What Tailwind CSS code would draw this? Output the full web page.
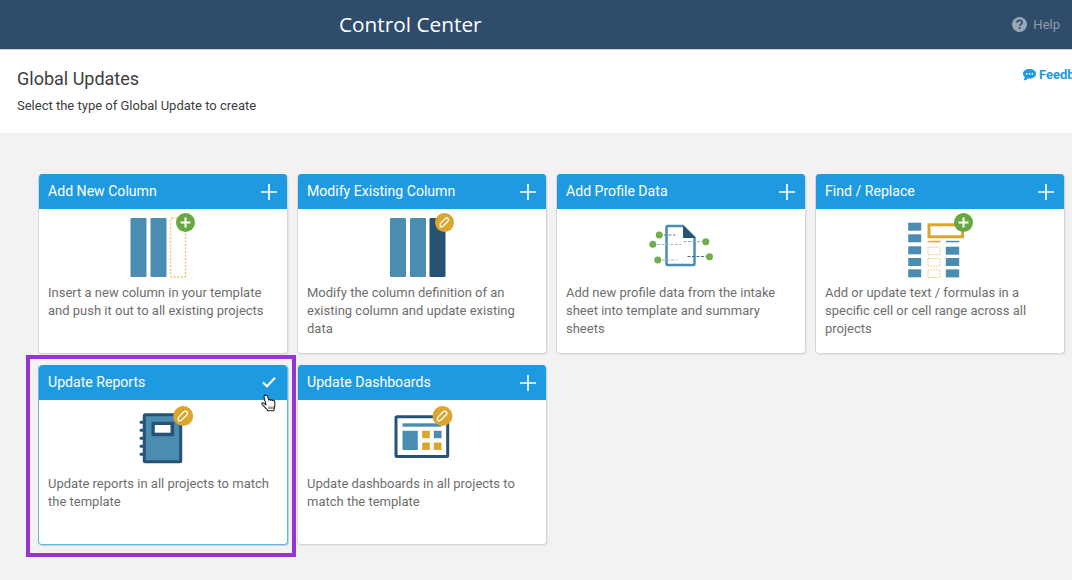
<!DOCTYPE html>
<html><head><meta charset="utf-8"><script src="https://cdn.jsdelivr.net/npm/@tailwindcss/browser@4"></script></head>
<body class="w-[1072px] h-[580px] overflow-hidden bg-[#f2f2f2] font-['Roboto',sans-serif]">
<header class="h-[50px] bg-[#2f4d6b] flex items-center border-b border-[#c3d0da]">
  <h1 class="ml-[339px] text-[20.800px] font-medium font-['Open_Sans',sans-serif] text-white leading-none">Control Center</h1>
  <div class="ml-auto mr-[12px] flex items-center gap-[6px] text-[#8e9bab] text-[13px]">
    <svg class="-mt-[1px]" width="15" height="15" viewBox="0 0 14 14"><circle cx="7" cy="7" r="7" fill="#9aa6b4"/><path d="M4.700 5.300c0-1.400 1-2.200 2.400-2.200s2.300.8 2.300 2c0 1-.6 1.400-1.200 1.800-.5.3-.8.6-.8 1.200" fill="none" stroke="#2f4d6b" stroke-width="1.600"/><rect x="6.300" y="9.300" width="1.700" height="1.700" fill="#2f4d6b"/></svg>
    <span>Help</span>
  </div>
</header>
<section class="h-[83px] bg-white flex">
  <div class="pl-[17px] pt-[17px] text-[#3d3d3d]">
    <h2 class="text-[18px] leading-[24px]">Global Updates</h2>
    <p class="text-[13px] leading-[20px] mt-[5px]">Select the type of Global Update to create</p>
  </div>
  <div class="ml-auto w-[49px] overflow-hidden pt-[16px] flex items-start gap-[3px] text-[13px] leading-[18px] font-bold text-[#1f9ade] whitespace-nowrap">
    <svg class="shrink-0 mt-[3px]" width="13" height="12" viewBox="0 0 13 12"><path d="M6.500 0C2.900 0 0 2 0 4.700c0 1.300.7 2.500 1.800 3.300C1.600 9.400 1 10.600 .4 11.500c1.700-.2 3.300-1 4.400-2.100.5.1 1.100.1 1.700.1C10.100 9.500 13 7.400 13 4.700S10.100 0 6.500 0z" fill="#1f9ade"/><circle cx="3.700" cy="4.800" r=".9" fill="#fff"/><circle cx="6.500" cy="4.800" r=".9" fill="#fff"/><circle cx="9.300" cy="4.800" r=".9" fill="#fff"/></svg>
    <span>Feedback</span>
  </div>
</section>
<main class="pl-[38px] pt-[41px] grid grid-cols-[repeat(4,250px)] gap-x-[9px] gap-y-[11px] auto-rows-[180px]">

  <article class="bg-white rounded-[4px] border border-[#d6d6d6] border-t-0 shadow-[1px_1px_0_#e6e6e6] flex flex-col overflow-hidden">
    <div class="h-[35px] shrink-0 bg-[#1e9be0] flex items-center justify-between pl-[9px] pr-[9px] text-white text-[14.100px]"><span>Add New Column</span>
      <svg width="18" height="18" viewBox="0 0 18 18"><path d="M9 1v16M1 9h16" stroke="#fff" stroke-width="1.700"/></svg></div>
    <svg class="self-center shrink-0" width="100" height="75" viewBox="112.500 209 100 75">
      <rect x="130" y="218" width="16" height="59" rx="1" fill="#4a8db0"/><rect x="150" y="218" width="16" height="59" rx="1" fill="#4a8db0"/>
      <rect x="170" y="218" width="15" height="59" rx="1.500" fill="none" stroke="#eec77a" stroke-width="1.500" stroke-dasharray="2 1.500"/>
      <circle cx="185" cy="222.500" r="9.500" fill="#69a744"/><path d="M185 217.500v10M180 222.500h10" stroke="#fff" stroke-width="2"/>
    </svg>
    <p class="px-[9px] text-[13px] leading-[18px] text-[#6e6e6e]">Insert a new column in your template and push it out to all existing projects</p>
  </article>

  <article class="bg-white rounded-[4px] border border-[#d6d6d6] border-t-0 shadow-[1px_1px_0_#e6e6e6] flex flex-col overflow-hidden">
    <div class="h-[35px] shrink-0 bg-[#1e9be0] flex items-center justify-between pl-[9px] pr-[9px] text-white text-[14.100px]"><span>Modify Existing Column</span>
      <svg width="18" height="18" viewBox="0 0 18 18"><path d="M9 1v16M1 9h16" stroke="#fff" stroke-width="1.700"/></svg></div>
    <svg class="self-center shrink-0" width="100" height="75" viewBox="371.500 209 100 75">
      <rect x="389.500" y="218" width="16" height="59" rx="1" fill="#4a8db0"/><rect x="409.500" y="218" width="16" height="59" rx="1" fill="#4a8db0"/><rect x="429" y="218" width="16" height="59" rx="1" fill="#255275"/>
      <circle cx="444" cy="222.500" r="9.500" fill="#dba52e"/><path d="M440.500 227l-1-.9.300-2.500 5-5c.8-.8 2-.8 2.700 0s.8 1.900 0 2.700l-5 5z" fill="none" stroke="#fff" stroke-width="1.300"/>
    </svg>
    <p class="px-[9px] text-[13px] leading-[18px] text-[#6e6e6e]">Modify the column definition of an existing column and update existing data</p>
  </article>

  <article class="bg-white rounded-[4px] border border-[#d6d6d6] border-t-0 shadow-[1px_1px_0_#e6e6e6] flex flex-col overflow-hidden">
    <div class="h-[35px] shrink-0 bg-[#1e9be0] flex items-center justify-between pl-[9px] pr-[9px] text-white text-[14.100px]"><span>Add Profile Data</span>
      <svg width="18" height="18" viewBox="0 0 18 18"><path d="M9 1v16M1 9h16" stroke="#fff" stroke-width="1.700"/></svg></div>
    <svg class="self-center shrink-0" width="100" height="75" viewBox="630.500 209 100 75">
      <path d="M667 226h15.500l11.500 11.500V264a1 1 0 0 1-1 1h-26a1 1 0 0 1-1-1v-37a1 1 0 0 1 1-1z" fill="#fff" stroke="#4a8db0" stroke-width="2.500"/>
      <path d="M682.500 225.500l12.500 12.500h-12.500z" fill="#255275"/>
      <g stroke-width="1.200" stroke-dasharray="3 1.500" fill="none">
        <path d="M659 235h16" stroke="#5b7f9c"/><path d="M652 244.500h29" stroke="#a9b6c9"/><path d="M657 260h20" stroke="#a9b6c9"/><path d="M683 241.500h22" stroke="#8ea3bb"/><path d="M687 256.500h22" stroke="#3f6a8c"/>
      </g>
      <g fill="#72ad49"><circle cx="658.700" cy="235" r="3.500"/><circle cx="652.300" cy="244.300" r="3.500"/><circle cx="657.300" cy="260" r="3.500"/><circle cx="705.300" cy="241.700" r="3.500"/><circle cx="709" cy="256.700" r="3.500"/></g>
    </svg>
    <p class="px-[9px] text-[13px] leading-[18px] text-[#6e6e6e]">Add new profile data from the intake sheet into template and summary sheets</p>
  </article>

  <article class="bg-white rounded-[4px] border border-[#d6d6d6] border-t-0 shadow-[1px_1px_0_#e6e6e6] flex flex-col overflow-hidden">
    <div class="h-[35px] shrink-0 bg-[#1e9be0] flex items-center justify-between pl-[9px] pr-[9px] text-white text-[14.100px]"><span>Find / Replace</span>
      <svg width="18" height="18" viewBox="0 0 18 18"><path d="M9 1v16M1 9h16" stroke="#fff" stroke-width="1.700"/></svg></div>
    <svg class="self-center shrink-0" width="100" height="75" viewBox="889.500 209 100 75">
      <g fill="#4a8db0"><rect x="907.700" y="222.700" width="13" height="8"/><rect x="907.700" y="234.300" width="13" height="8"/><rect x="907.700" y="246.300" width="13" height="8"/><rect x="907.700" y="258" width="13" height="8"/><rect x="907.700" y="269.300" width="13" height="8"/>
      <rect x="945.300" y="246.700" width="13.400" height="8"/><rect x="945.300" y="258" width="13.400" height="8"/><rect x="945.300" y="269.400" width="13.400" height="8"/><rect x="945.300" y="240.800" width="13.400" height="1.500"/></g>
      <rect x="928.500" y="224.800" width="33.500" height="12" fill="none" stroke="#dba52e" stroke-width="3"/>
      <rect x="927" y="240.800" width="13" height="1.500" fill="#dba52e"/>
      <g fill="none" stroke="#eec77a" stroke-width="1" stroke-dasharray="1.500 1"><rect x="927.500" y="247.200" width="12" height="7.500"/><rect x="927.500" y="258.500" width="12" height="7.500"/><rect x="927.500" y="270" width="12" height="7.500"/></g>
      <circle cx="963" cy="222.500" r="9.500" fill="#69a744"/><path d="M963 217.500v10M958 222.500h10" stroke="#fff" stroke-width="2"/>
    </svg>
    <p class="px-[9px] text-[13px] leading-[18px] text-[#6e6e6e]">Add or update text / formulas in a specific cell or cell range across all projects</p>
  </article>

  <article class="relative bg-white rounded-[4px] border border-[#5cb9ec] border-t-0 shadow-[1px_1px_0_#d0d0d0] flex flex-col">
    <div class="h-[35px] shrink-0 bg-[#1e9be0] rounded-t-[4px] flex items-center justify-between pl-[9px] pr-[9px] text-white text-[14.100px]"><span>Update Reports</span>
      <svg width="18" height="18" viewBox="0 0 18 18"><path d="M3 8.500l4 3.800 8-8.600" fill="none" stroke="#fff" stroke-width="2"/></svg></div>
    <svg class="self-center shrink-0" width="100" height="75" viewBox="112.500 400 100 75">
      <rect x="143.800" y="414.800" width="36.400" height="47" rx="1" fill="#4a8db0" stroke="#255275" stroke-width="3"/>
      <rect x="151" y="421.700" width="22.700" height="14.600" rx="1" fill="#255275"/><rect x="154.300" y="425" width="15.700" height="7.700" fill="#fff"/>
      <g stroke="#255275" stroke-width="3" stroke-linecap="round"><path d="M140.500 422.300h3M140.500 430.300h3M140.500 438.300h3M140.500 446.300h3M140.500 454.300h3"/></g>
      <circle cx="182.700" cy="416" r="10" fill="#dba52e"/><path d="M178.800 421l-1.100-1 .3-2.700 5.400-5.500c.9-.9 2.200-.9 3 0s.9 2.100 0 3l-5.500 5.500z" fill="none" stroke="#fff" stroke-width="1.300"/>
    </svg>
    <p class="px-[9px] text-[13px] leading-[18px] text-[#6e6e6e]">Update reports in all projects to match the template</p>
    <div class="absolute -left-[13px] -right-[9px] -top-[10px] -bottom-[13px] border-4 border-[#9535d3] pointer-events-none"></div>
    <svg class="absolute left-[222px] top-[29px]" width="16" height="18" viewBox="0 0 16 18"><path d="M4.500 1.500c.8-.6 1.700-.2 2 .6l1.300 4c.4-.6 1.500-.6 1.900.1.500-.5 1.500-.4 1.900.3.600-.4 1.500-.2 1.800.6.500 1.500.7 3.200.3 4.800l-.8 4.800H6.700l-.6-1.300C4.500 14 2.700 11.700 1 10.300c-.5-.7.200-1.800 1.200-1.400l2.700 1.800-1.800-7.400c-.1-.9.100-1.700.4-2.300z" fill="#fff" stroke="#222" stroke-width="1.100" stroke-linejoin="round"/><path d="M8 12.500v2.500M10 12.500v2.500M12 12.500v2.500" stroke="#444" stroke-width="1"/></svg>
  </article>

  <article class="bg-white rounded-[4px] border border-[#d6d6d6] border-t-0 shadow-[1px_1px_0_#e6e6e6] flex flex-col overflow-hidden">
    <div class="h-[35px] shrink-0 bg-[#1e9be0] flex items-center justify-between pl-[9px] pr-[9px] text-white text-[14.100px]"><span>Update Dashboards</span>
      <svg width="18" height="18" viewBox="0 0 18 18"><path d="M9 1v16M1 9h16" stroke="#fff" stroke-width="1.700"/></svg></div>
    <svg class="self-center shrink-0" width="100" height="75" viewBox="371.500 400 100 75">
      <rect x="395.500" y="416.800" width="51.700" height="39.700" rx="1" fill="#fff" stroke="#255275" stroke-width="3"/>
      <g fill="#4a8db0"><rect x="402" y="423.300" width="38.700" height="3.400"/><rect x="402" y="430.700" width="15.300" height="19.300" rx=".5"/><rect x="433.300" y="430.700" width="7.700" height="7.600" rx=".5"/></g>
      <g fill="#dba52e"><rect x="421.700" y="430.700" width="7.600" height="7.600" rx=".5"/><rect x="421.700" y="442.500" width="7.600" height="7.500" rx=".5"/><rect x="433.300" y="442.500" width="7.700" height="7.500" rx=".5"/></g>
      <circle cx="442" cy="416" r="10" fill="#dba52e"/><path d="M438.100 421l-1.100-1 .3-2.700 5.400-5.500c.9-.9 2.200-.9 3 0s.9 2.100 0 3l-5.500 5.500z" fill="none" stroke="#fff" stroke-width="1.300"/>
    </svg>
    <p class="px-[9px] text-[13px] leading-[18px] text-[#6e6e6e]">Update dashboards in all projects to match the template</p>
  </article>
</main>
</body></html>
